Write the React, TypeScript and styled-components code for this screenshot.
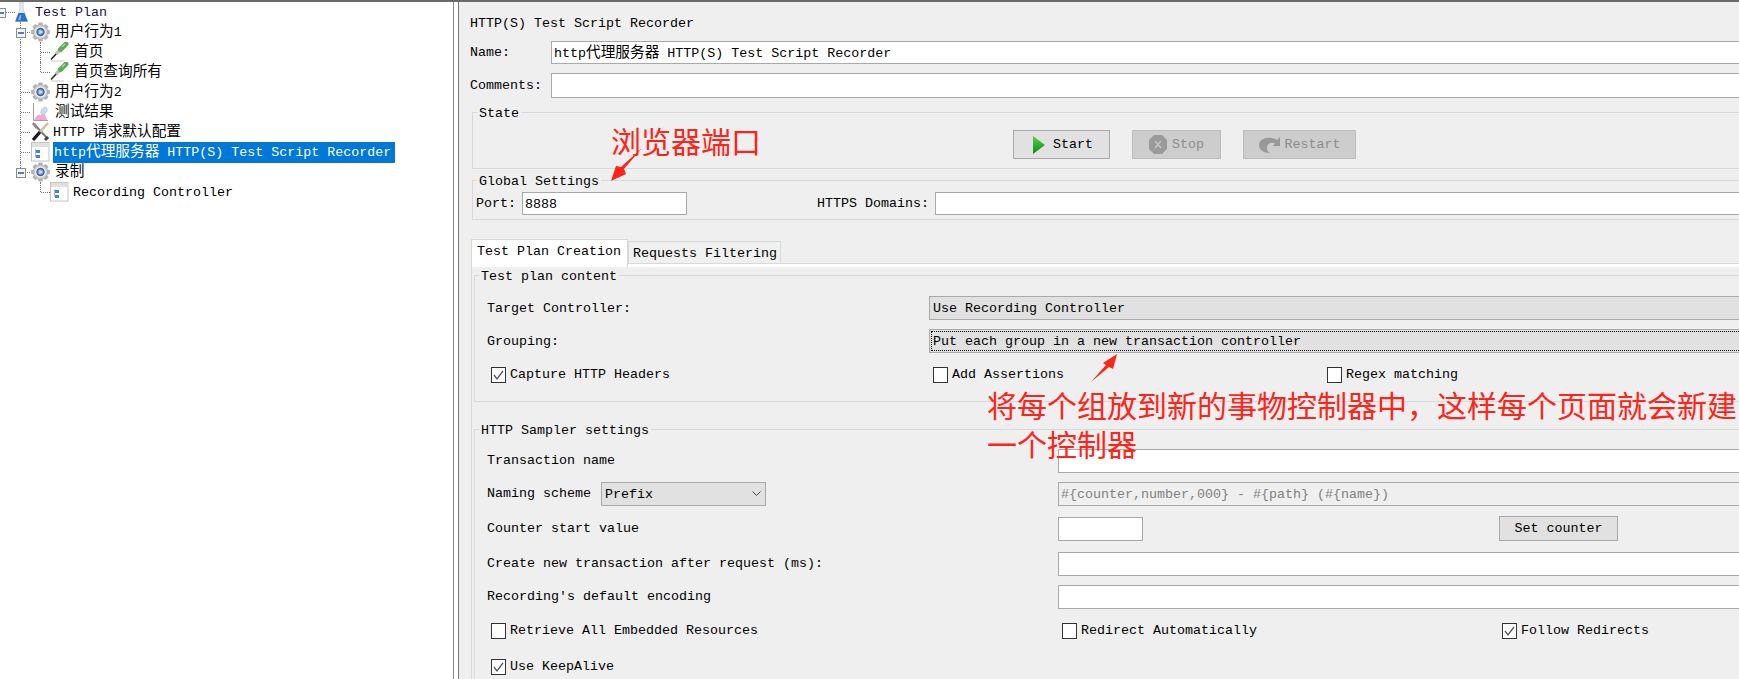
import styled, { createGlobalStyle, css } from "styled-components";

const GlobalStyle = createGlobalStyle`
  html, body { margin: 0; padding: 0; overflow: hidden; background: #efefef; }
  * { box-sizing: border-box; }
`;

const Screen = styled.div`
  position: relative;
  display: flex;
  width: 1739px;
  height: 679px;
  overflow: hidden;
  border-top: 2px solid #6a6a6a;
  font: 13.33px/20px "Liberation Mono", "Noto Sans CJK SC", monospace;
  color: #000;
`;

const Han = styled.span`
  font-family: "Noto Sans CJK SC", sans-serif;
  font-size: 14.67px;
  line-height: 1;
`;

/* ---------- tree ---------- */

const TreePane = styled.div`
  flex: none;
  width: 453px;
  background: #fff;
  overflow: hidden;
`;

const TreeRow = styled.div`
  display: flex;
  align-items: center;
  height: 20px;
  white-space: nowrap;
`;

const Guide = styled.span<{ $v?: "full" | "up"; $h?: boolean; $w?: number; $shift?: number }>`
  position: relative;
  flex: none;
  width: ${(p) => p.$w ?? 20}px;
  height: 20px;
  margin-left: ${(p) => p.$shift ?? 0}px;
  ${(p) =>
    p.$v &&
    css`
      &::before {
        content: "";
        position: absolute;
        left: 10px;
        top: 0;
        height: ${p.$v === "full" ? 20 : 10}px;
        border-left: 1px dotted #777;
      }
    `}
  ${(p) =>
    p.$h &&
    css`
      &::after {
        content: "";
        position: absolute;
        left: 11px;
        right: 0;
        top: 10px;
        border-top: 1px dotted #777;
      }
    `}
`;

const Handle = styled.i`
  position: absolute;
  z-index: 1;
  left: 6px;
  top: 6px;
  width: 10px;
  height: 10px;
  background: #f4f4f4;
  border: 1px solid #8c8c8c;
  &::after {
    content: "";
    position: absolute;
    left: 1px;
    right: 1px;
    top: 3px;
    height: 2px;
    background: #5b7bb0;
  }
`;

const TreeIcon = styled.span<{ $w?: number; $shift?: number }>`
  flex: none;
  display: flex;
  width: ${(p) => p.$w ?? 19}px;
  height: 20px;
  margin-left: ${(p) => p.$shift ?? 0}px;
`;

const TreeText = styled.span<{ $gap: number; $selected?: boolean; $root?: boolean }>`
  margin-left: ${(p) => p.$gap}px;
  padding-top: 1px;
  ${(p) => p.$root && "color: #1a0a50;"}
  ${(p) =>
    p.$selected &&
    css`
      padding: 1px 4px 0 1px;
      background: #0078d7;
      color: #fff;
    `}
`;

const GearIcon = () => (
  <svg width="19" height="20" viewBox="0 0 19 20">
    {[0, 45, 90, 135].map((a) => (
      <rect key={a} x="7.2" y="0.6" width="4.6" height="18.8" rx="1" fill="#b4b4b4" transform={`rotate(${a} 9.5 10)`} />
    ))}
    <circle cx="9.500" cy="10" r="7.200" fill="#d2d2d2" stroke="#a6a6a6" strokeWidth=".7" />
    <circle cx="9.500" cy="10" r="5.300" fill="#f0f3f8" />
    <circle cx="9.500" cy="10" r="4.200" fill="#3a5fa6" />
    <circle cx="9.500" cy="10" r="2.800" fill="#7f9fd2" />
    <path d="M8.300 8 11.800 10 8.300 12Z" fill="#e4ecf8" />
  </svg>
);

const FlaskIcon = () => (
  <svg width="13" height="20" viewBox="0 0 13 20">
    <path d="M4.800 0h3.400v7l4.500 12.500H.3L4.800 7Z" fill="#e4e9f3" stroke="#b4bccc" strokeWidth=".6" />
    <path d="M3.600 11h5.800l3.300 8.500H.3Z" fill="#2c6ccc" />
    <path d="M5 13h1.500l-1 5H3Z" fill="#86b0ea" />
  </svg>
);

const DropperIcon = () => (
  <svg width="19" height="20" viewBox="0 0 19 20">
    <path d="M1 19h13" stroke="#d0d0d0" strokeWidth="1.200" />
    <path d="M1 17.500 8 10" stroke="#2a2a2a" strokeWidth="1.600" />
    <path d="M6 12l5-5" stroke="#b8c8b0" strokeWidth="3.500" />
    <path d="M10.500 7.500 16 2" stroke="#62a957" strokeWidth="5" strokeLinecap="round" />
    <path d="M12 5l3-3" stroke="#a5dc98" strokeWidth="1.500" />
  </svg>
);

const GraphIcon = () => (
  <svg width="19" height="20" viewBox="0 0 19 20">
    <path d="M2.500 1v17.500H17" fill="none" stroke="#a0a0a0" />
    <path d="M3 18c2-4 4-6 7-5l3-3 3 8Z" fill="#f3a8dc" />
    <ellipse cx="13" cy="9" rx="2.700" ry="4" fill="#c6dcf4" stroke="#9fbcdc" strokeWidth=".5" transform="rotate(30 13 9)" />
  </svg>
);

const ToolsIcon = () => (
  <svg width="19" height="20" viewBox="0 0 19 20">
    <path d="M2 1l15 16" stroke="#7c7c7c" strokeWidth="2" />
    <path d="M1 2l3-1 3 4-2 2Z" fill="#8c8c8c" />
    <path d="M17 1l-8 9" stroke="#d2bd96" strokeWidth="2.500" />
    <path d="M9 10l-7 8" stroke="#1a1a1a" strokeWidth="3.300" />
    <path d="M15 19l3-3-2-2-3 3Z" fill="#444" />
  </svg>
);

const RecorderIcon = () => (
  <svg width="19" height="20" viewBox="0 0 19 20">
    <rect x=".5" y=".5" width="17.500" height="18.500" fill="#fff" stroke="#c4c4c4" />
    <rect x="1" y="1" width="16.500" height="4" fill="#e0e0e0" />
    <rect x="5" y="8" width="4" height="3" fill="#3f86dc" />
    <rect x="5" y="13" width="4" height="3" fill="#3f86dc" />
    <path d="M4.500 7v8" stroke="#9ab" strokeWidth=".8" />
  </svg>
);

const Tree = () => (
  <TreePane>
    <TreeRow>
      <Guide $w={25} $shift={-10} $h><Handle /></Guide>
      <TreeIcon $w={13}><FlaskIcon /></TreeIcon>
      <TreeText $gap={7} $root>Test Plan</TreeText>
    </TreeRow>
    <TreeRow>
      <Guide $shift={10} $v="full" $h><Handle /></Guide>
      <TreeIcon $shift={1}><GearIcon /></TreeIcon>
      <TreeText $gap={5}><Han>用户行为</Han>1</TreeText>
    </TreeRow>
    <TreeRow>
      <Guide $shift={10} $v="full" />
      <Guide $v="full" $h />
      <TreeIcon><DropperIcon /></TreeIcon>
      <TreeText $gap={5}><Han>首页</Han></TreeText>
    </TreeRow>
    <TreeRow>
      <Guide $shift={10} $v="full" />
      <Guide $v="up" $h />
      <TreeIcon><DropperIcon /></TreeIcon>
      <TreeText $gap={5}><Han>首页查询所有</Han></TreeText>
    </TreeRow>
    <TreeRow>
      <Guide $shift={10} $v="full" $h />
      <TreeIcon $shift={1}><GearIcon /></TreeIcon>
      <TreeText $gap={5}><Han>用户行为</Han>2</TreeText>
    </TreeRow>
    <TreeRow>
      <Guide $shift={10} $v="full" $h />
      <TreeIcon $shift={1}><GraphIcon /></TreeIcon>
      <TreeText $gap={5}><Han>测试结果</Han></TreeText>
    </TreeRow>
    <TreeRow>
      <Guide $shift={10} $v="full" $h />
      <TreeIcon $shift={1}><ToolsIcon /></TreeIcon>
      <TreeText $gap={3}>HTTP <Han>请求默认配置</Han></TreeText>
    </TreeRow>
    <TreeRow>
      <Guide $shift={10} $v="full" $h />
      <TreeIcon $shift={1}><RecorderIcon /></TreeIcon>
      <TreeText $gap={3} $selected>http<Han>代理服务器</Han> HTTP(S) Test Script Recorder</TreeText>
    </TreeRow>
    <TreeRow>
      <Guide $shift={10} $v="up" $h><Handle /></Guide>
      <TreeIcon $shift={1}><GearIcon /></TreeIcon>
      <TreeText $gap={5}><Han>录制</Han></TreeText>
    </TreeRow>
    <TreeRow>
      <Guide $shift={30} $v="up" $h />
      <TreeIcon><RecorderIcon /></TreeIcon>
      <TreeText $gap={4}>Recording Controller</TreeText>
    </TreeRow>
  </TreePane>
);

/* ---------- right side ---------- */

const Divider = styled.div`
  flex: none;
  width: 6px;
  background: #fff;
  border-left: 1px solid #8a8a8a;
  border-right: 1px solid #777;
`;

const Pane = styled.div`
  flex: 1;
  min-width: 0;
  overflow: hidden;
  background: #efefef;
`;

const Stage = styled.div`
  width: 1437px;
  padding-top: 10px;
`;

const Title = styled.div`
  padding: 2px 0 0 11px;
  height: 20px;
`;

const TopRow = styled.div<{ $mt: number }>`
  display: flex;
  align-items: center;
  margin-top: ${(p) => p.$mt}px;
  padding-left: 11px;
`;

const TopLabel = styled.span`
  flex: none;
  width: 81px;
  padding-top: 1px;
`;

const Field = styled.div<{ $w?: number; $h?: number; $off?: boolean }>`
  flex: ${(p) => (p.$w ? "none" : 1)};
  width: ${(p) => (p.$w ? `${p.$w}px` : "auto")};
  height: ${(p) => p.$h ?? 24}px;
  padding: 0 2px;
  line-height: ${(p) => p.$h ?? 24}px;
  white-space: nowrap;
  background: ${(p) => (p.$off ? "#efefef" : "#fff")};
  color: ${(p) => (p.$off ? "#808080" : "#000")};
  border: 1px solid #a9a9a9;
`;

const Group = styled.fieldset<{ $h: number; $mt: number; $ml: number }>`
  display: block;
  min-width: 0;
  height: ${(p) => p.$h}px;
  margin: ${(p) => p.$mt}px 0 0 ${(p) => p.$ml}px;
  padding: 0;
  border: 1px solid #d9d9d9;
`;

const Caption = styled.legend`
  height: 16px;
  margin-left: 4px;
  padding: 0 2px;
  line-height: 20px;
`;

const ButtonRow = styled.div`
  display: flex;
  justify-content: center;
  gap: 22px;
  padding-top: 10px;
`;

const RunButton = styled.div<{ $w: number; $off?: boolean }>`
  display: flex;
  align-items: center;
  justify-content: center;
  gap: ${(p) => (p.$off ? 4 : 8)}px;
  width: ${(p) => p.$w}px;
  height: 29px;
  padding-left: ${(p) => (p.$off ? 0 : 4)}px;
  background: ${(p) => (p.$off ? "#cdcdcd" : "#e1e1e1")};
  color: ${(p) => (p.$off ? "#8c8c8c" : "#000")};
  border: 1px solid ${(p) => (p.$off ? "#bcbcbc" : "#a9a9a9")};
`;

const PortRow = styled.div`
  display: flex;
  align-items: center;
  gap: 6px;
  padding: 4px 0 0 3px;
`;

const Spaced = styled.span<{ $ml: number }>`
  margin-left: ${(p) => p.$ml}px;
`;

const TabBar = styled.div`
  display: flex;
  align-items: flex-end;
  height: 25px;
  margin: 19px 0 0 12px;
`;

const Tab = styled.div<{ $active?: boolean }>`
  position: relative;
  z-index: 1;
  height: ${(p) => (p.$active ? 28 : 23)}px;
  width: ${(p) => (p.$active ? 157 : 153)}px;
  margin-bottom: ${(p) => (p.$active ? -3 : 0)}px;
  padding-left: ${(p) => (p.$active ? 5 : 4)}px;
  line-height: 23px;
  background: ${(p) => (p.$active ? "#fff" : "#f0f0f0")};
  border: 1px solid #d9d9d9;
  border-bottom-width: ${(p) => (p.$active ? 0 : 1)}px;
`;

const TabBody = styled.div`
  margin: -1px 0 0 12px;
  height: 420px;
  border-top: 1px solid #d9d9d9;
  border-left: 1px solid #d9d9d9;
`;

const TabCap = styled.div`
  height: 3px;
  background: #fff;
`;

const FormRow = styled.div<{ $mt: number }>`
  display: flex;
  align-items: center;
  margin-top: ${(p) => p.$mt}px;
  padding-left: 12px;
`;

const Lead = styled.div<{ $w: number; $low?: boolean }>`
  flex: none;
  display: flex;
  align-items: center;
  gap: 10px;
  width: ${(p) => p.$w}px;
  padding-top: ${(p) => (p.$low ? 2 : 0)}px;
`;

const Combo = styled.div<{ $w?: number; $focus?: boolean }>`
  position: relative;
  flex: ${(p) => (p.$w ? "none" : 1)};
  width: ${(p) => (p.$w ? `${p.$w}px` : "auto")};
  height: 24px;
  padding-left: 3px;
  line-height: 24px;
  white-space: nowrap;
  background: #e1e1e1;
  border: 1px solid #a9a9a9;
  ${(p) =>
    p.$focus &&
    css`
      outline: 1px dotted #000;
      outline-offset: -3px;
    `}
  & > svg {
    position: absolute;
    right: 4px;
    top: 8px;
  }
`;

const SetButton = styled.div`
  flex: none;
  width: 119px;
  height: 25px;
  margin-left: 356px;
  line-height: 23px;
  text-align: center;
  background: #e1e1e1;
  border: 1px solid #a9a9a9;
`;

const CheckRow = styled.div<{ $mt: number; $cols: string; $pl: number }>`
  display: grid;
  grid-template-columns: ${(p) => p.$cols};
  margin-top: ${(p) => p.$mt}px;
  padding-left: ${(p) => p.$pl}px;
`;

const CheckItem = styled.span`
  display: flex;
  align-items: center;
  gap: 4px;
  height: 16px;
  white-space: nowrap;
`;

const Box = styled.i`
  flex: none;
  display: block;
  width: 15px;
  height: 16px;
  background: #fff;
  border: 1px solid #333;
  & > svg {
    display: block;
  }
`;

const Check = ({ label, on }: { label: string; on?: boolean }) => (
  <CheckItem>
    <Box>
      {on && (
        <svg width="13" height="14" viewBox="0 0 13 14">
          <path d="M2 7l3 4 6-8" fill="none" stroke="#555" strokeWidth="1.300" />
        </svg>
      )}
    </Box>
    {label}
  </CheckItem>
);

/* ---------- red notes drawn on top of the screenshot ---------- */

const Note = styled.div<{ $x: number; $y: number; $w: number }>`
  position: absolute;
  left: ${(p) => p.$x}px;
  top: ${(p) => p.$y}px;
  width: ${(p) => p.$w}px;
  font: 400 30px/39px "Noto Sans CJK SC", sans-serif;
  color: #ff2318;
`;

const NoteArrow = styled.svg<{ $x: number; $y: number }>`
  position: absolute;
  left: ${(p) => p.$x}px;
  top: ${(p) => p.$y}px;
`;

export default function App() {
  return (
    <>
      <GlobalStyle />
      <Screen>
        <Tree />
        <Divider />
        <Pane>
          <Stage>
            <Title>HTTP(S) Test Script Recorder</Title>
            <TopRow $mt={9}>
              <TopLabel>Name:</TopLabel>
              <Field $h={23}>http<Han>代理服务器</Han> HTTP(S) Test Script Recorder</Field>
            </TopRow>
            <TopRow $mt={9}>
              <TopLabel>Comments:</TopLabel>
              <Field $h={25} />
            </TopRow>

            <Group $h={65} $mt={6} $ml={13}>
              <Caption>State</Caption>
              <ButtonRow>
                <RunButton $w={97}>
                  <svg width="12" height="18" viewBox="0 0 12 18">
                    <defs>
                      <linearGradient id="go" x1="0" x2="0" y1="0" y2="1">
                        <stop offset="0" stopColor="#5ccf4c" />
                        <stop offset="1" stopColor="#0b8a12" />
                      </linearGradient>
                    </defs>
                    <path d="M0 0 12 9 0 18Z" fill="url(#go)" />
                  </svg>
                  Start
                </RunButton>
                <RunButton $w={89} $off>
                  <svg width="20" height="21" viewBox="0 0 20 21">
                    <path d="M6 1h8l5 5v9l-5 5H6l-5-5V6Z" fill="#9a9a9a" />
                    <path d="M7 7l6 7M13 7l-6 7" stroke="#c4c4c4" strokeWidth="1.500" />
                  </svg>
                  Stop
                </RunButton>
                <RunButton $w={113} $off>
                  <svg width="23" height="18" viewBox="0 0 23 18">
                    <path d="M22 1v9h-7l2-2.500C14 5.500 9 7 9 12c0 2 1 4 3 5C6 17 1 14 1 9c0-6 9-10 18-5Z" fill="#999" />
                  </svg>
                  Restart
                </RunButton>
              </ButtonRow>
            </Group>

            <Group $h={48} $mt={3} $ml={13}>
              <Caption>Global Settings</Caption>
              <PortRow>
                Port:
                <Field $w={165} $h={23}>8888</Field>
                <Spaced $ml={124}>HTTPS Domains:</Spaced>
                <Field $h={23} />
              </PortRow>
            </Group>

            <TabBar>
              <Tab $active>Test Plan Creation</Tab>
              <Tab>Requests Filtering</Tab>
            </TabBar>
            <TabBody>
              <TabCap />
              <Group $h={135} $mt={0} $ml={2}>
                <Caption>Test plan content</Caption>
                <FormRow $mt={13}>
                  <Lead $w={442} $low>Target Controller:</Lead>
                  <Combo>Use Recording Controller</Combo>
                </FormRow>
                <FormRow $mt={9}>
                  <Lead $w={442} $low>Grouping:</Lead>
                  <Combo $focus>Put each group in a new transaction controller</Combo>
                </FormRow>
                <CheckRow $mt={14} $pl={16} $cols="442px 394px 1fr">
                  <Check label="Capture HTTP Headers" on />
                  <Check label="Add Assertions" />
                  <Check label="Regex matching" />
                </CheckRow>
              </Group>

              <Group $h={270} $mt={19} $ml={2}>
                <Caption>HTTP Sampler settings</Caption>
                <FormRow $mt={12}>
                  <Lead $w={571}>Transaction name</Lead>
                  <Field />
                </FormRow>
                <FormRow $mt={9}>
                  <Lead $w={571}>
                    Naming scheme
                    <Combo $w={165}>
                      Prefix
                      <svg width="9" height="6" viewBox="0 0 9 6">
                        <path d="M.5.5l4 4 4-4" fill="none" stroke="#444" />
                      </svg>
                    </Combo>
                  </Lead>
                  <Field $off>{"#{counter,number,000} - #{path} (#{name})"}</Field>
                </FormRow>
                <FormRow $mt={10}>
                  <Lead $w={571}>Counter start value</Lead>
                  <Field $w={85} />
                  <SetButton>Set counter</SetButton>
                </FormRow>
                <FormRow $mt={11}>
                  <Lead $w={571}>Create new transaction after request (ms):</Lead>
                  <Field />
                </FormRow>
                <FormRow $mt={9}>
                  <Lead $w={571}>Recording's default encoding</Lead>
                  <Field />
                </FormRow>
                <CheckRow $mt={14} $pl={16} $cols="571px 440px 1fr">
                  <Check label="Retrieve All Embedded Resources" />
                  <Check label="Redirect Automatically" />
                  <Check label="Follow Redirects" on />
                </CheckRow>
                <CheckRow $mt={20} $pl={16} $cols="1fr">
                  <Check label="Use KeepAlive" on />
                </CheckRow>
              </Group>
            </TabBody>
          </Stage>
        </Pane>

        <Note $x={611} $y={119} $w={160}>浏览器端口</Note>
        <NoteArrow $x={611} $y={146} width="32" height="34" viewBox="0 0 32 34">
          <path d="M31 0 13 21l2 5L0 33l5-15 5 1Z" fill="#ff2318" />
        </NoteArrow>
        <Note $x={987} $y={383} $w={756}>将每个组放到新的事物控制器中，这样每个页面就会新建一个控制器</Note>
        <NoteArrow $x={1091} $y={352} width="27" height="29" viewBox="0 0 27 29">
          <path d="M0 28 15 11l-3-2L26 0l-4 15-4-2Z" fill="#ff2318" />
        </NoteArrow>
      </Screen>
    </>
  );
}
